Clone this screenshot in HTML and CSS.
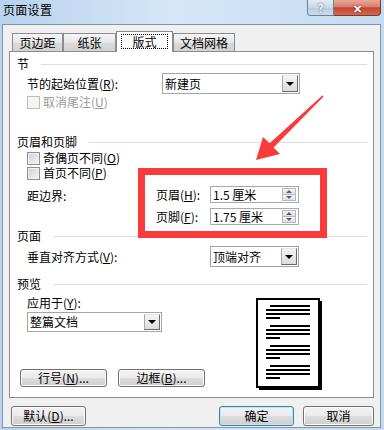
FILE: index.html
```html
<!DOCTYPE html>
<html lang="zh-CN">
<head>
  <meta charset="UTF-8">
  <title>页面设置</title>
  <link rel="stylesheet" href="styles.css">
</head>
<body>

<div class="window">
  <div class="titlebar">
    <span class="title">页面设置</span>
    <div class="caption">
      <span class="cap cap-help">?</span>
      <span class="cap cap-close">✕</span>
    </div>
  </div>

  <div class="client">
    <div class="tabs">
      <div class="tab t1">页边距</div>
      <div class="tab t2">纸张</div>
      <div class="tab t3 active"><span class="focus">版式</span></div>
      <div class="tab t4">文档网格</div>
    </div>

    <div class="panel">
      <div class="group">节</div>
      <div class="row row-start">
        <span class="label lbl-start">节的起始位置(<u>R</u>):</span>
        <div class="select sel-start"><span>新建页</span><i class="drop"></i></div>
      </div>
      <div class="check c-endnote disabled"><i class="box"></i>取消尾注(<u>U</u>)</div>

      <div class="group g-hf">页眉和页脚</div>
      <div class="check c-odd"><i class="box"></i>奇偶页不同(<u>O</u>)</div>
      <div class="check c-first"><i class="box"></i>首页不同(<u>P</u>)</div>
      <div class="dist">
        <span class="label dist-label">距边界:</span>
        <div class="dist-fields">
          <span class="label">页眉(<u>H</u>):</span>
          <div class="spin"><span>1.5 厘米</span><i class="spin-btns"><b class="up"></b><b class="down"></b></i></div>
          <span class="label">页脚(<u>F</u>):</span>
          <div class="spin"><span>1.75 厘米</span><i class="spin-btns"><b class="up"></b><b class="down"></b></i></div>
        </div>
      </div>

      <div class="group g-page">页面</div>
      <div class="row row-valign">
        <span class="label lbl-valign">垂直对齐方式(<u>V</u>):</span>
        <div class="select sel-valign"><span>顶端对齐</span><i class="drop"></i></div>
      </div>

      <div class="group g-preview">预览</div>
      <div class="preview">
        <div class="preview-left">
          <div class="label lbl-apply">应用于(<u>Y</u>):</div>
          <div class="select sel-apply"><span>整篇文档</span><i class="drop"></i></div>
          <div class="panel-btns">
            <span class="btn btn-wide">行号(<u>N</u>)...</span>
            <span class="btn btn-wide">边框(<u>B</u>)...</span>
          </div>
        </div>
        <svg class="page" width="68" height="94" viewBox="0 0 68 94">
          <rect x="65" y="4" width="2" height="89" fill="#000"/>
          <rect x="4" y="90" width="63" height="3" fill="#000"/>
          <rect x="2" y="2" width="62" height="88" fill="#fff" stroke="#000" stroke-width="2"/>
          <g fill="#000">
            <rect x="15" y="8" width="40" height="2"/>
            <rect x="11" y="12" width="44" height="2"/>
            <rect x="11" y="16" width="44" height="2"/>
            <rect x="11" y="20" width="14" height="2"/>
            <rect x="15" y="28" width="40" height="2"/>
            <rect x="11" y="32" width="44" height="2"/>
            <rect x="11" y="36" width="44" height="2"/>
            <rect x="11" y="40" width="14" height="2"/>
            <rect x="15" y="48" width="40" height="2"/>
            <rect x="11" y="52" width="44" height="2"/>
            <rect x="11" y="56" width="44" height="2"/>
            <rect x="11" y="60" width="14" height="2"/>
            <rect x="15" y="68" width="40" height="2"/>
            <rect x="11" y="72" width="44" height="2"/>
            <rect x="11" y="76" width="44" height="2"/>
            <rect x="11" y="80" width="14" height="2"/>
          </g>
        </svg>
      </div>
    </div>

    <div class="footer">
      <span class="btn btn-reset">默认(<u>D</u>)...</span>
      <span class="btn btn-ok default">确定</span>
      <span class="btn btn-cancel">取消</span>
    </div>
  </div>

  <!-- annotation drawn over the dialog -->
  <svg class="annot" width="384" height="430" viewBox="0 0 384 430">
    <polygon fill="#f93b3b" points="322.6,95.2 269.6,143.2 263,137 256,160 280,154 273.6,147.4 323.4,96.8"/>
    <rect x="141.5" y="171.5" width="182" height="63" fill="none" stroke="#f93b3b" stroke-width="7"/>
  </svg>
</div>

</body>
</html>
```

FILE: styles.css
```css
* {
  box-sizing: border-box;
}

body {
  margin: 0;
  font-family: "Noto Sans CJK SC", "Noto Sans", sans-serif;
  font-size: 12px;
  line-height: 14px;
  color: #000;
}

u {
  text-decoration: underline;
}

.window {
  position: relative;
  width: 384px;
  height: 430px;
  padding: 0 3px 2px 2px;
  display: flex;
  flex-direction: column;
  background: linear-gradient(90deg, #b9d2ed 0%, #d5e6f8 45%, #c6dbf1 100%);
}

/* title bar */
.titlebar {
  height: 24px;
  display: flex;
  justify-content: space-between;
  align-items: flex-start;
}

.title {
  padding: 3px 0 0 1px;
  letter-spacing: 0.3px;
}

.caption {
  display: flex;
}

.cap {
  height: 16px;
  display: flex;
  align-items: center;
  justify-content: center;
  font-weight: bold;
  color: #fff;
}

.cap-help {
  width: 27px;
  border: 1px solid #6f8198;
  border-top: 0;
  border-radius: 0 0 0 4px;
  background: linear-gradient(#e3ecf6, #c8d7e8 50%, #b9cbe0 51%, #cddcec);
  color: #eef3f8;
  font-size: 12px;
  text-shadow: 0 0 2px #4c5d72;
}

.cap-close {
  width: 47px;
  border: 1px solid #7b3a31;
  border-top: 0;
  border-left: 0;
  border-radius: 0 0 4px 0;
  background: linear-gradient(#eaa899, #d9806b 45%, #c7452f 52%, #d26b52);
  font-size: 11px;
  text-shadow: 0 0 2px #5a1b12;
}

/* client area */
.client {
  flex: 1;
  display: flex;
  flex-direction: column;
  border: 1px solid #8394a7;
  background: #f0f0f0;
  padding: 0 6px;
}

.tabs {
  height: 26px;
  display: flex;
  align-items: flex-end;
  padding-left: 3px;
}

.tab {
  height: 18px;
  border: 1px solid #898c95;
  border-bottom: 0;
  background: linear-gradient(#f6f6f6, #e6e6e6 50%, #dadada 51%, #d2d2d2);
  display: flex;
  align-items: center;
  justify-content: center;
}

.t1 { width: 51px; }
.t2 { width: 53px; }
.t3 { width: 57px; }
.t4 { width: 62px; }

.tab.active {
  position: relative;
  z-index: 1;
  height: 21px;
  margin-bottom: -1px;
  background: #fff;
  padding-bottom: 2px;
}

.focus {
  border: 1px dotted #000;
  padding: 0 10px;
  line-height: 13px;
}

.panel {
  border: 1px solid #898c95;
  background: #fff;
  padding: 5px 6px 6px 7px;
}

.group {
  display: flex;
  align-items: center;
  height: 14px;
}

.group::after {
  content: "";
  flex: 1;
  height: 1px;
  margin-left: 12px;
  background: #d5dfe5;
}

.g-hf { margin-top: 26px; }
.g-page { margin-top: 4px; }
.g-preview { margin-top: 10px; }

.row {
  display: flex;
  align-items: center;
  padding-left: 10px;
  margin-top: 2px;
}

.row-valign { margin-top: 3px; }

.lbl-start { width: 135px; }
.lbl-valign { width: 183px; }

/* combo boxes */
.select {
  display: flex;
  align-items: center;
  height: 21px;
  border: 1px solid #a5a5a5;
  background: #fff;
  padding-left: 2px;
}

.select span {
  flex: 1;
}

.sel-start { width: 138px; }
.sel-valign { width: 89px; }
.sel-apply {
  width: 135px;
  height: 20px;
  margin: 2px 0 0 10px;
}

.drop {
  align-self: stretch;
  width: 16px;
  margin: 1px;
  border: 1px solid;
  border-color: #e6e6e6 #6a6a6a #6a6a6a #a8a8a8;
  background: linear-gradient(#f4f4f4, #dcdcdc);
  display: flex;
  align-items: center;
  justify-content: center;
}

.drop::after {
  content: "";
  border-left: 4px solid transparent;
  border-right: 4px solid transparent;
  border-top: 4px solid #000;
}

/* check boxes */
.check {
  display: flex;
  align-items: center;
  height: 14px;
  padding-left: 10px;
}

.c-endnote { margin-top: 1px; }
.c-odd { margin-top: 2px; }
.c-first { margin-top: 1px; }

.box {
  width: 13px;
  height: 13px;
  margin-right: 3px;
  border: 1px solid #8e8f8f;
  background: linear-gradient(135deg, #cdd1d6, #f6f6f6);
  box-shadow: inset 0 0 0 1px #f2f2f2;
}

.check.disabled {
  color: #9a9a9a;
}

.check.disabled .box {
  border-color: #bdbdbd;
  background: #f4f4f4;
  box-shadow: none;
}

/* header / footer distances */
.dist {
  display: flex;
  align-items: flex-start;
  padding-left: 10px;
  margin-top: 6px;
}

.dist-label {
  width: 129px;
  margin-top: 3px;
}

.dist-fields {
  display: grid;
  grid-template-columns: 54px 89px;
  grid-auto-rows: 17px;
  row-gap: 5px;
  align-items: center;
}

.spin {
  height: 17px;
  display: flex;
  align-items: center;
  border: 1px solid #a9a9a9;
  padding-left: 2px;
}

.spin span {
  flex: 1;
}

.spin-btns {
  display: flex;
  flex-direction: column;
  width: 14px;
  height: 13px;
  margin-right: 2px;
}

.spin-btns b {
  flex: 1;
  border: 1px solid #b8b8b8;
  background: linear-gradient(#f6f6f6, #e0e0e0);
  display: flex;
  align-items: center;
  justify-content: center;
}

.spin-btns b + b {
  border-top: 0;
}

.up::after {
  content: "";
  border-left: 3px solid transparent;
  border-right: 3px solid transparent;
  border-bottom: 3px solid #4d6185;
}

.down::after {
  content: "";
  border-left: 3px solid transparent;
  border-right: 3px solid transparent;
  border-top: 3px solid #4d6185;
}

/* preview */
.preview {
  display: flex;
  align-items: flex-start;
}

.preview-left {
  width: 238px;
}

.lbl-apply {
  margin-top: 5px;
  padding-left: 10px;
}

.panel-btns {
  display: flex;
  gap: 11px;
  margin: 37px 0 0 3px;
}

.page {
  display: block;
  margin-top: 6px;
}

/* buttons */
.btn {
  height: 18px;
  display: flex;
  align-items: center;
  justify-content: center;
  border: 1px solid #707070;
  border-radius: 3px;
  background: linear-gradient(#f2f2f2, #ebebeb 50%, #dddddd 51%, #cfcfcf);
  box-shadow: inset 0 0 0 1px #fbfbfb;
}

.btn-wide { width: 87px; }

.footer {
  display: flex;
  gap: 9px;
  margin-top: 8px;
  padding-left: 2px;
}

.footer .btn {
  height: 20px;
}

.btn-reset { width: 75px; }
.btn-ok { width: 75px; margin-left: auto; }
.btn-cancel { width: 71px; }

.btn.default {
  border-color: #3c7fb1;
  box-shadow: inset 0 0 0 1px #bfe6f7;
}

.annot {
  position: absolute;
  top: 0;
  left: 0;
  pointer-events: none;
}
```
